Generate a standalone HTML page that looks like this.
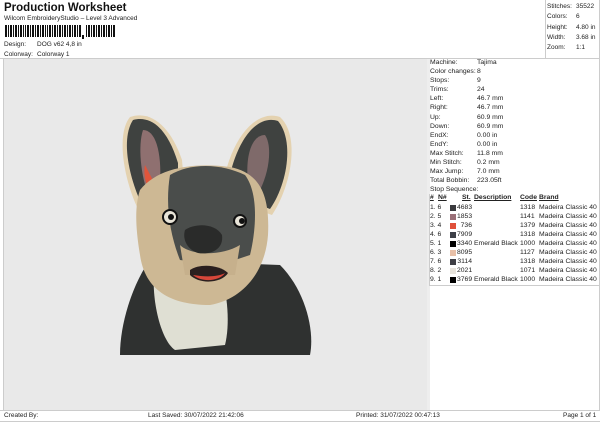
<!DOCTYPE html>
<html><head><style>
body{margin:0;width:600px;height:424px;background:#fff;font-family:"Liberation Sans",sans-serif;color:#222;position:relative;overflow:hidden;font-size:7px}
.a{position:absolute;white-space:nowrap}
.r{position:absolute;left:430px;font-size:6.8px}
.h{position:absolute;top:194px;font-size:6.8px;font-weight:bold;text-decoration:underline}
</style></head><body>
<div class="a" style="left:4px;top:2px;font-size:11.5px;font-weight:bold;color:#111">Production Worksheet</div>
<div class="a" style="left:4px;top:15px;font-size:6.5px">Wilcom EmbroideryStudio – Level 3 Advanced</div>
<svg class="a" style="left:5px;top:25px" width="112" height="14">
<g fill="#111">
<rect x="0" y="0" width="2" height="12"/><rect x="3" y="0" width="1" height="12"/><rect x="5" y="0" width="2" height="12"/><rect x="8" y="0" width="1" height="12"/><rect x="10" y="0" width="2" height="12"/><rect x="13" y="0" width="1" height="12"/><rect x="15" y="0" width="2" height="12"/><rect x="18" y="0" width="1" height="12"/><rect x="20" y="0" width="1" height="12"/><rect x="22" y="0" width="2" height="12"/><rect x="25" y="0" width="1" height="12"/><rect x="27" y="0" width="2" height="12"/><rect x="30" y="0" width="1" height="12"/><rect x="32" y="0" width="2" height="12"/><rect x="35" y="0" width="1" height="12"/><rect x="37" y="0" width="2" height="12"/><rect x="40" y="0" width="1" height="12"/><rect x="42" y="0" width="1" height="12"/><rect x="44" y="0" width="2" height="12"/><rect x="47" y="0" width="1" height="12"/><rect x="49" y="0" width="2" height="12"/><rect x="52" y="0" width="1" height="12"/><rect x="54" y="0" width="2" height="12"/><rect x="57" y="0" width="1" height="12"/><rect x="59" y="0" width="2" height="12"/><rect x="62" y="0" width="1" height="12"/><rect x="64" y="0" width="2" height="12"/><rect x="67" y="0" width="1" height="12"/><rect x="69" y="0" width="2" height="12"/><rect x="72" y="0" width="1" height="12"/><rect x="74" y="0" width="2" height="12"/><rect x="77" y="10" width="2" height="4"/><rect x="81" y="0" width="1" height="12"/><rect x="83" y="0" width="2" height="12"/><rect x="86" y="0" width="1" height="12"/><rect x="88" y="0" width="2" height="12"/><rect x="91" y="0" width="1" height="12"/><rect x="93" y="0" width="2" height="12"/><rect x="96" y="0" width="1" height="12"/><rect x="98" y="0" width="2" height="12"/><rect x="101" y="0" width="1" height="12"/><rect x="103" y="0" width="2" height="12"/><rect x="106" y="0" width="1" height="12"/><rect x="108" y="0" width="2" height="12"/>
</g></svg>
<div class="a" style="left:4px;top:41px;font-size:6.5px">Design:</div><div class="a" style="left:37px;top:41px;font-size:6.5px">DOG v62 4,8 in</div>
<div class="a" style="left:4px;top:51px;font-size:6.5px">Colorway:</div><div class="a" style="left:37px;top:51px;font-size:6.5px">Colorway 1</div>

<div class="a" style="left:0;top:0;width:599px;height:410px;border-right:1px solid #ccc"></div>
<div class="a" style="left:545px;top:0;width:1px;height:58px;background:#ccc"></div>
<div class="a" style="left:547px;top:2px;font-size:6.5px;line-height:10.3px">Stitches:<br>Colors:<br>Height:<br>Width:<br>Zoom:</div>
<div class="a" style="left:576px;top:2px;font-size:6.5px;line-height:10.3px">35522<br>6<br>4.80 in<br>3.68 in<br>1:1</div>
<div class="a" style="left:0;top:58px;width:600px;height:1px;background:#ccc"></div>

<div class="a" style="left:3px;top:59px;width:424px;height:351px;background:#e9e9e9;border-left:1px solid #ccc;border-right:1px solid #ccc"></div>
<div class="a" style="left:427px;top:59px;width:3px;height:351px;background:#eee"></div>

<svg class="a" style="left:110px;top:105px" width="210" height="260" viewBox="0 0 210 260">
<path d="M20 12 C40 5 60 20 72 55 L75 90 L30 108 C15 80 5 30 20 12Z" fill="#e4d2b0"/>
<path d="M23 15 C42 10 58 25 68 58 L68 85 L32 100 C20 75 10 35 23 15Z" fill="#3f4240"/>
<path d="M33 25 C45 25 52 45 50 80 L40 95 C30 70 28 40 33 25Z" fill="#8f7070"/>
<path d="M35 60 L48 85 L42 93 C36 80 33 70 35 60Z" fill="#e0553b"/>
<path d="M170 12 C150 5 128 25 117 62 L120 95 L162 110 C182 80 190 30 170 12Z" fill="#e4d2b0"/>
<path d="M168 16 C150 10 132 28 122 62 L124 90 L160 104 C178 78 184 35 168 16Z" fill="#3f4240"/>
<path d="M155 30 C142 30 135 50 138 78 L150 85 C160 65 162 40 155 30Z" fill="#7f6a6a"/>
<path d="M10 250 C10 215 25 175 40 155 L170 160 C195 185 205 225 200 250Z" fill="#2f3130"/>
<path d="M45 160 C40 190 50 235 65 245 L115 240 C120 220 118 190 110 165Z" fill="#dfdfd3"/>
<path d="M30 85 C50 60 90 58 120 62 C150 68 160 90 158 130 C155 170 130 195 100 200 C60 200 35 185 30 150 C25 120 25 100 30 85Z" fill="#cdb894"/>
<path d="M60 70 C80 58 110 58 135 70 C150 90 145 130 140 150 L110 160 L70 155 C60 130 55 100 60 70Z" fill="#4a4d4b"/>
<path d="M70 140 C80 150 110 152 130 140 L125 170 L75 170Z" fill="#c6b08c"/>
<circle cx="60" cy="112" r="7" fill="#e8e4d8" stroke="#111" stroke-width="2"/><circle cx="61" cy="112" r="3" fill="#111"/>
<circle cx="130" cy="116" r="6" fill="#e8e4d8" stroke="#111" stroke-width="2"/><circle cx="132" cy="116" r="3" fill="#111"/>
<path d="M75 125 C85 118 105 118 112 130 C114 145 100 150 88 148 C78 145 72 135 75 125Z" fill="#2a2b2a"/>
<path d="M80 165 C90 158 110 160 118 168 C112 178 90 180 80 170Z" fill="#2a1f1f"/>
<path d="M83 170 C95 172 108 172 115 168 C110 176 92 178 83 170Z" fill="#d8463a"/>
</svg>

<div class="r" style="top:58px;line-height:9.1px">Machine:<br>Color changes:<br>Stops:<br>Trims:<br>Left:<br>Right:<br>Up:<br>Down:<br>EndX:<br>EndY:<br>Max Stitch:<br>Min Stitch:<br>Max Jump:<br>Total Bobbin:<br>Stop Sequence:</div>
<div class="a" style="left:477px;top:58px;line-height:9.1px;font-size:6.8px">Tajima<br>8<br>9<br>24<br>46.7 mm<br>46.7 mm<br>60.9 mm<br>60.9 mm<br>0.00 in<br>0.00 in<br>11.8 mm<br>0.2 mm<br>7.0 mm<br>223.05ft</div>
<div class="a" style="left:429px;top:194px;width:1px;height:92px;background:#ccc"></div>
<div class="h" style="left:430px">#</div>
<div class="h" style="left:438px">N#</div>
<div class="h" style="left:462px">St.</div>
<div class="h" style="left:474px">Description</div>
<div class="h" style="left:520px">Code</div>
<div class="h" style="left:539px">Brand</div>
<div class="a" style="left:430px;top:203px;font-size:6.8px;line-height:9px">1. 6<br>2. 5<br>3. 4<br>4. 6<br>5. 1<br>6. 3<br>7. 6<br>8. 2<br>9. 1</div>
<div class="a" style="left:450px;top:204.5px;width:6px;line-height:0">
<div style="height:6px;background:#3a3a3e;margin-bottom:3px"></div><div style="height:6px;background:#9a7078;margin-bottom:3px"></div><div style="height:6px;background:#e0503a;margin-bottom:3px"></div><div style="height:6px;background:#3e4048;margin-bottom:3px"></div><div style="height:6px;background:#000;margin-bottom:3px"></div><div style="height:6px;background:#e8c0a8;margin-bottom:3px"></div><div style="height:6px;background:#3e3e44;margin-bottom:3px"></div><div style="height:6px;background:#e8e4dc;margin-bottom:3px"></div><div style="height:6px;background:#000"></div></div>
<div class="a" style="left:457px;top:203px;font-size:6.8px;line-height:9px;text-align:right;width:15px">4683<br>1853<br>736<br>7909<br>3340<br>8095<br>3114<br>2021<br>3769</div>
<div class="a" style="left:474px;top:203px;font-size:6.8px;line-height:9px"><br><br><br><br>Emerald Black<br><br><br><br>Emerald Black</div>
<div class="a" style="left:520px;top:203px;font-size:6.8px;line-height:9px">1318<br>1141<br>1379<br>1318<br>1000<br>1127<br>1318<br>1071<br>1000</div>
<div class="a" style="left:539px;top:203px;font-size:6.8px;line-height:9px">Madeira Classic 40<br>Madeira Classic 40<br>Madeira Classic 40<br>Madeira Classic 40<br>Madeira Classic 40<br>Madeira Classic 40<br>Madeira Classic 40<br>Madeira Classic 40<br>Madeira Classic 40</div>
<div class="a" style="left:430px;top:285px;width:169px;height:1px;background:#ccc"></div>

<div class="a" style="left:0;top:410px;width:600px;height:1px;background:#ccc"></div>
<div class="a" style="left:0;top:421px;width:600px;height:1px;background:#ccc"></div>
<div class="a" style="left:4px;top:412px;font-size:6.5px">Created By:</div>
<div class="a" style="left:148px;top:412px;font-size:6.5px">Last Saved: 30/07/2022 21:42:06</div>
<div class="a" style="left:356px;top:412px;font-size:6.5px">Printed: 31/07/2022 00:47:13</div>
<div class="a" style="left:563px;top:412px;font-size:6.5px">Page 1 of 1</div>
</body></html>
